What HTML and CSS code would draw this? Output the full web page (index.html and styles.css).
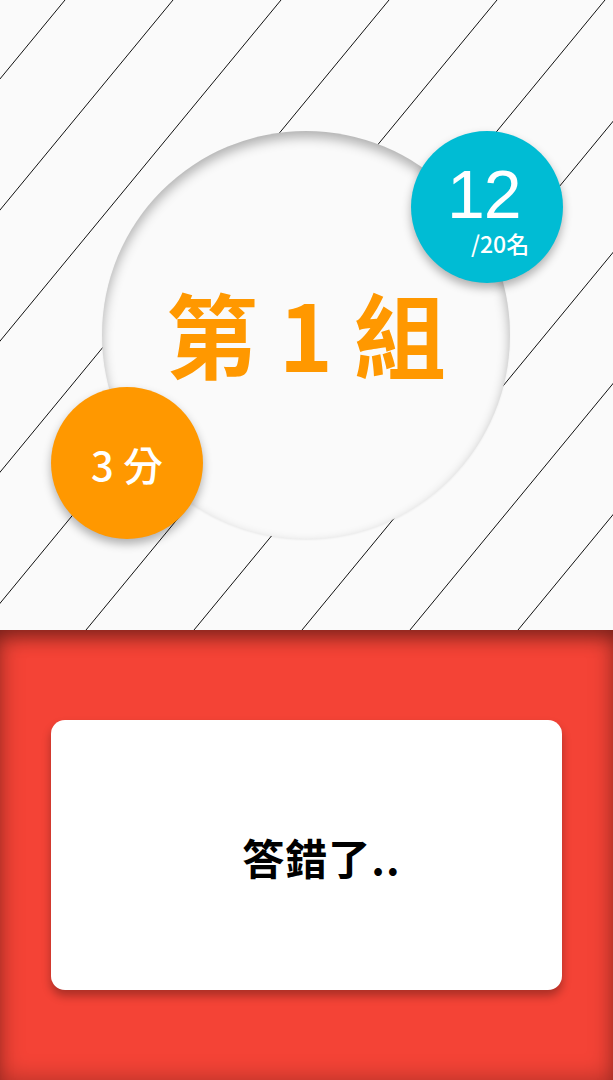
FILE: index.html
```html
<!DOCTYPE html>
<html lang="zh-Hant">
<head>
<meta charset="utf-8">
<title>第 1 組</title>
<link rel="stylesheet" href="styles.css">
</head>
<body>
<section class="stage">
  <svg class="stripes" width="613" height="630" viewBox="0 0 613 630" aria-hidden="true">
    <g stroke="#111" stroke-width="1" fill="none">
      <line x1="-43" y1="0" x2="-562" y2="630"/>
      <line x1="65" y1="0" x2="-454" y2="630"/>
      <line x1="173" y1="0" x2="-346" y2="630"/>
      <line x1="281" y1="0" x2="-238" y2="630"/>
      <line x1="389" y1="0" x2="-130" y2="630"/>
      <line x1="497" y1="0" x2="-22" y2="630"/>
      <line x1="605" y1="0" x2="86" y2="630"/>
      <line x1="713" y1="0" x2="194" y2="630"/>
      <line x1="821" y1="0" x2="302" y2="630"/>
      <line x1="929" y1="0" x2="410" y2="630"/>
      <line x1="1037" y1="0" x2="518" y2="630"/>
      <line x1="1145" y1="0" x2="626" y2="630"/>
    </g>
  </svg>
  <div class="group-circle">
    <h1 class="group-title">第 1 組</h1>
    <div class="badge badge-rank">
      <span class="rank-num">12</span>
      <span class="rank-total">/20名</span>
    </div>
    <div class="badge badge-score">3 分</div>
  </div>
</section>
<section class="result">
  <div class="result-card">
    <p class="result-text">答錯了..</p>
  </div>
</section>
</body>
</html>
```

FILE: styles.css
```css
* { box-sizing: border-box; }

html, body {
  margin: 0;
  padding: 0;
}

body {
  width: 613px;
  height: 1080px;
  overflow: hidden;
  font-family: "Noto Sans CJK TC", "Noto Sans", sans-serif;
  background: #fafafa;
}

.stage {
  position: relative;
  height: 630px;
  padding-top: 131px;
  background: #fafafa;
  overflow: hidden;
}

.stripes {
  position: absolute;
  left: 0;
  top: 0;
}

.group-circle {
  position: relative;
  width: 408px;
  height: 408px;
  margin-left: 102px;
  border-radius: 50%;
  background: #fafafa;
  box-shadow: inset 0 6px 12px rgba(0, 0, 0, 0.3), 0 1px 2px rgba(0, 0, 0, 0.06);
  display: flex;
  align-items: center;
  justify-content: center;
}

.group-title {
  margin: 0 0 6px 0;
  color: #ff9800;
  font-size: 92px;
  font-weight: 700;
  line-height: 1;
  white-space: pre;
}

.badge {
  position: absolute;
  width: 152px;
  height: 152px;
  border-radius: 50%;
  color: #fff;
  box-shadow: 0 5px 10px rgba(0, 0, 0, 0.3);
}

.badge-rank {
  left: 309px;
  top: 0;
  background: #00bcd4;
  display: flex;
  flex-direction: column;
  padding: 34px 0 0 36px;
}

.rank-num {
  font-family: "Liberation Sans", "Open Sans", sans-serif;
  font-size: 68px;
  line-height: 58px;
  height: 58px;
  font-weight: 400;
  letter-spacing: -1px;
}

.rank-total {
  margin: 8px 0 0 24px;
  font-size: 23px;
  font-weight: 500;
  line-height: 24px;
}

.badge-score {
  left: -51px;
  top: 256px;
  background: #ff9800;
  display: flex;
  align-items: center;
  justify-content: center;
  font-size: 40px;
  font-weight: 500;
  padding-top: 2px;
}

.result {
  height: 450px;
  background: #f44336;
  padding: 90px 51px;
  box-shadow: inset 0 14px 18px -6px rgba(0, 0, 0, 0.35), inset 0 0 24px rgba(0, 0, 0, 0.3);
}

.result-card {
  height: 270px;
  background: #fff;
  border-radius: 14px;
  box-shadow: 0 6px 10px rgba(0, 0, 0, 0.3);
  display: flex;
  align-items: center;
  justify-content: center;
}

.result-text {
  margin: 0;
  font-size: 42px;
  font-weight: 700;
  color: #000;
  letter-spacing: 1px;
  padding: 2px 0 0 30px;
}
```
